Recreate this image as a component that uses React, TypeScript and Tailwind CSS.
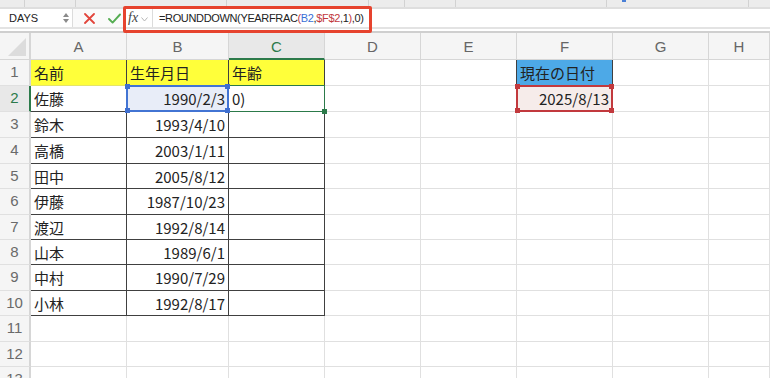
import React from 'react'

type Col = { name: string; w: string }

const COLS: Col[] = [
  { name: 'A', w: 'w-[96px]' },
  { name: 'B', w: 'w-[102px]' },
  { name: 'C', w: 'w-[96px]' },
  { name: 'D', w: 'w-[96px]' },
  { name: 'E', w: 'w-[96px]' },
  { name: 'F', w: 'w-[96px]' },
  { name: 'G', w: 'w-[96px]' },
  { name: 'H', w: 'w-[61px]' }
]

// row boundaries taken from the sheet: 58 → 84 → 110 ... → 365
const ROW_H = [
  'h-[26px]',
  'h-[26px]',
  'h-[26px]',
  'h-[26px]',
  'h-[25px]',
  'h-[26px]',
  'h-[25px]',
  'h-[25px]',
  'h-[26px]',
  'h-[25px]',
  'h-[26px]',
  'h-[25px]',
  'h-[13px]'
]

const PEOPLE: [string, string][] = [
  ['佐藤', '1990/2/3'],
  ['鈴木', '1993/4/10'],
  ['高橋', '2003/1/11'],
  ['田中', '2005/8/12'],
  ['伊藤', '1987/10/23'],
  ['渡辺', '1992/8/14'],
  ['山本', '1989/6/1'],
  ['中村', '1990/7/29'],
  ['小林', '1992/8/17']
]

const cellText = (row: number, col: string): { text: string; right?: boolean } => {
  if (row === 1) {
    if (col === 'A') return { text: '名前' }
    if (col === 'B') return { text: '生年月日' }
    if (col === 'C') return { text: '年齢' }
    if (col === 'F') return { text: '現在の日付' }
  }
  if (row >= 2 && row <= 10) {
    const p = PEOPLE[row - 2]
    if (col === 'A') return { text: p[0] }
    if (col === 'B') return { text: p[1], right: true }
  }
  if (row === 2 && col === 'C') return { text: '0)' }
  if (row === 2 && col === 'F') return { text: '2025/8/13', right: true }
  return { text: '' }
}

const inTable = (row: number, col: string) => row >= 1 && row <= 10 && ['A', 'B', 'C'].includes(col)

const cellBg = (row: number, col: string) => {
  if (row === 1 && ['A', 'B', 'C'].includes(col)) return 'bg-[#ffff3a]'
  if (row === 1 && col === 'F') return 'bg-[#4da9e7]'
  if (row === 2 && col === 'B') return 'bg-[#e8edf8]'
  if (row === 2 && col === 'F') return 'bg-[#f6ecea]'
  return 'bg-white'
}

const Handles = ({ color, all = true }: { color: string; all?: boolean }) => (
  <>
    {all && <span className={`absolute -left-[3px] -top-[3px] h-[5px] w-[5px] ${color}`} />}
    {all && <span className={`absolute -right-[3px] -top-[3px] h-[5px] w-[5px] ${color}`} />}
    {all && <span className={`absolute -bottom-[3px] -left-[3px] h-[5px] w-[5px] ${color}`} />}
    <span className={`absolute -bottom-[3px] -right-[3px] h-[5px] w-[5px] ${color}`} />
  </>
)

const Overlay = ({ row, col }: { row: number; col: string }) => {
  if (row === 2 && col === 'B') {
    return (
      <div className="pointer-events-none absolute -inset-px z-20 border-2 border-[#4274d3]">
        <Handles color="bg-[#3f6fd0]" />
      </div>
    )
  }
  if (row === 2 && col === 'C') {
    return (
      <div className="pointer-events-none absolute -inset-px z-10 border-[1.5px] border-[#2c7a4a]">
        <Handles color="bg-[#2c7a4a]" all={false} />
      </div>
    )
  }
  if (row === 2 && col === 'F') {
    return (
      <div className="pointer-events-none absolute -inset-px z-10 border-2 border-[#c2393d]">
        <Handles color="bg-[#c2393d]" />
      </div>
    )
  }
  return null
}

const Cell = ({ row, col, w }: { row: number; col: string; w: string }) => {
  const { text, right } = cellText(row, col)
  const darkRight = inTable(row, col) || (row === 1 && (col === 'E' || col === 'F'))
  const darkBottom = inTable(row, col) && row >= 2
  return (
    <div
      className={`relative flex shrink-0 items-center border-r border-b px-[3px] text-[15px] leading-none text-[#222] ${w} ${cellBg(row, col)} ${
        darkRight ? 'border-r-[#404040]' : 'border-r-[#e0e0e0]'
      } ${darkBottom ? 'border-b-[#404040]' : row === 1 && inTable(row, col) ? 'border-b-[#e4e46a]' : 'border-b-[#e0e0e0]'} ${
        right ? 'justify-end' : 'justify-start'
      }`}
    >
      <span className="whitespace-nowrap">{text}</span>
      <Overlay row={row} col={col} />
    </div>
  )
}

const FormulaText = () => (
  <div className="whitespace-nowrap font-['Liberation_Sans',Arial,sans-serif] text-[11px] tracking-[-0.35px] text-[#222]">
    =ROUNDDOWN(YEARFRAC<span className="text-[#c2393d]">(</span>
    <span className="text-[#3a6fd6]">B2</span>,<span className="text-[#c2393d]">$F$2</span>,1
    <span className="text-[#c2393d]">)</span>,0)
  </div>
)

export default function App() {
  const rows = ROW_H.map((h, i) => ({ n: i + 1, h }))

  return (
    <div className="relative h-[378px] w-[770px] overflow-hidden bg-white font-['Noto_Sans_CJK_JP','Noto_Sans',sans-serif]">
      {/* ribbon remnant */}
      <div className="flex h-[7px] bg-[#ececec]">
        <div className="w-[25px] border-r border-[#d2d2d2]" />
        <div className="w-[51px] border-r border-[#d2d2d2]" />
        <div className="w-[151px] border-r border-[#d2d2d2]" />
        <div className="w-[142px] border-r border-[#d2d2d2]" />
        <div className="w-[36px] border-r border-[#d2d2d2]" />
        <div className="w-[51px] border-r border-[#d2d2d2]" />
        <div className="w-[151px] border-r border-[#d2d2d2]" />
        <div className="relative w-[142px] border-r border-[#d2d2d2]">
          <span className="absolute left-[15px] top-0 h-[2px] w-[4px] bg-[#4a7fd6]" />
        </div>
        <div className="grow" />
      </div>

      {/* formula bar */}
      <div className="flex h-[22px] items-center border-y-2 border-t-[#dedede] border-b-[#e3e3e3] bg-[#fafafa]">
        <div className="flex h-full w-[73px] items-center justify-between border-r border-[#dcdcdc] bg-white pl-[9px] pr-[3px]">
          <span className="font-['Liberation_Sans',Arial,sans-serif] text-[11px] text-[#222]">DAYS</span>
          <div className="flex flex-col items-center gap-[2px]">
            <svg width="6" height="4" viewBox="0 0 6 4">
              <path d="M0 4 L3 0 L6 4 Z" fill="#8a8a8a" />
            </svg>
            <svg width="6" height="4" viewBox="0 0 6 4">
              <path d="M0 0 L3 4 L6 0 Z" fill="#8a8a8a" />
            </svg>
          </div>
        </div>
        <div className="flex h-full w-[50px] items-center">
          <svg className="ml-[11px]" width="11" height="11" viewBox="0 0 11 11">
            <path d="M1 1 L10 10 M10 1 L1 10" stroke="#e2453b" strokeWidth="1.8" strokeLinecap="round" />
          </svg>
          <svg className="ml-[13px]" width="13" height="11" viewBox="0 0 13 11">
            <path d="M1 6 L4.6 9.6 L12 1.5" stroke="#55ad52" strokeWidth="1.9" fill="none" strokeLinecap="round" strokeLinejoin="round" />
          </svg>
        </div>
        <div className="flex h-full w-[30px] items-center border-r border-[#dcdcdc] bg-white pl-[5px]">
          <span className="font-['Liberation_Serif',serif] text-[14px] italic leading-none text-[#444]">fx</span>
          <svg className="ml-[3px] mt-[2px]" width="7" height="5" viewBox="0 0 7 5">
            <path d="M0.5 0.5 L3.5 4 L6.5 0.5" stroke="#b5b5b5" strokeWidth="1" fill="none" />
          </svg>
        </div>
        <div className="flex h-full grow items-center bg-white pl-[6px]">
          <FormulaText />
        </div>
      </div>
      <div className="h-[2px] bg-white" />
      <div className="h-[2px] bg-[#cfcfcf]" />

      {/* column headers */}
      <div className="flex h-[27px]">
        <div className="relative w-[31px] shrink-0 border-r-2 border-b border-r-[#d6d6d6] border-b-[#d6d6d6] bg-[#f5f5f5]">
          <svg className="absolute bottom-[3px] right-[3px]" width="18" height="18" viewBox="0 0 18 18">
            <path d="M18 0 L18 18 L0 18 Z" fill="#dcdcdc" />
          </svg>
        </div>
        {COLS.map((c) => (
          <div
            key={c.name}
            className={`flex shrink-0 items-center justify-center pt-[3px] font-['Liberation_Sans',Arial,sans-serif] text-[15px] ${c.w} ${
              c.name === 'C'
                ? 'border-r border-b-2 border-r-[#d6d6d6] border-b-[#2c7a4a] bg-[#e8e8e8] text-[#2c7a4a]'
                : 'border-r border-b border-[#d6d6d6] bg-[#f5f5f5] text-[#666]'
            }`}
          >
            {c.name}
          </div>
        ))}
      </div>

      {/* rows */}
      {rows.map((r) => (
        <div key={r.n} className={`flex ${r.h}`}>
          <div
            className={`flex w-[31px] shrink-0 items-center justify-center border-b border-b-[#e0e0e0] font-['Liberation_Sans',Arial,sans-serif] text-[15px] ${
              r.n === 2
                ? 'border-r-2 border-r-[#2c7a4a] bg-[#e8e8e8] text-[#2c7a4a]'
                : 'border-r-2 border-r-[#d6d6d6] bg-[#f5f5f5] text-[#6a6a6a]'
            } ${r.n === 13 ? 'items-start pt-[1px]' : ''}`}
          >
            {r.n}
          </div>
          {COLS.map((c) => (
            <Cell key={c.name} row={r.n} col={c.name} w={c.w} />
          ))}
        </div>
      ))}

      {/* annotation around the formula */}
      <div className="pointer-events-none absolute left-[123px] top-[6px] h-[27px] w-[249px] rounded-[2px] border-[3px] border-[#e6432e]" />
    </div>
  )
}
